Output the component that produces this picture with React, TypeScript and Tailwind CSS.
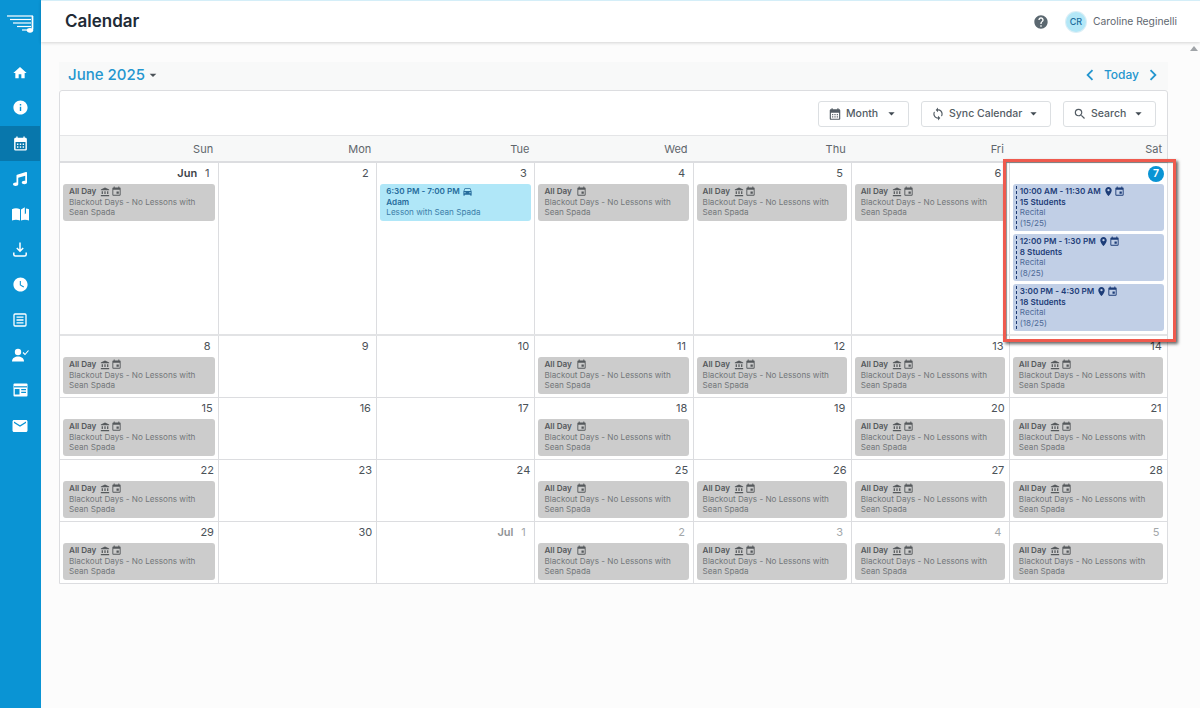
import { ReactNode } from 'react';
import { FaMusic } from 'react-icons/fa';
import {
  MdHome,
  MdInfo,
  MdCalendarMonth,
  MdWatchLater,
  MdHelp,
  MdPlace,
  MdDirectionsCar,
  MdAccountBalance,
  MdEvent,
  MdArrowDropDown,
  MdSync,
  MdSearch,
  MdChevronLeft,
  MdChevronRight,
  MdEmail,
} from 'react-icons/md';

const days = ['Sun', 'Mon', 'Tue', 'Wed', 'Thu', 'Fri', 'Sat'];

type EventKind = 'none' | 'blackout' | 'blackoutBank';

type Cell = {
  label: string;
  prefix?: string;
  muted?: boolean;
  kind: EventKind;
};

const firstRow: Cell[] = [
  { label: '1', prefix: 'Jun', kind: 'blackoutBank' },
  { label: '2', kind: 'none' },
  { label: '3', kind: 'none' },
  { label: '4', kind: 'blackout' },
  { label: '5', kind: 'blackoutBank' },
  { label: '6', kind: 'blackoutBank' },
  { label: '7', kind: 'none' },
];

const weeks: Cell[][] = [
  [
    { label: '8', kind: 'blackoutBank' },
    { label: '9', kind: 'none' },
    { label: '10', kind: 'none' },
    { label: '11', kind: 'blackout' },
    { label: '12', kind: 'blackoutBank' },
    { label: '13', kind: 'blackoutBank' },
    { label: '14', kind: 'blackoutBank' },
  ],
  [
    { label: '15', kind: 'blackoutBank' },
    { label: '16', kind: 'none' },
    { label: '17', kind: 'none' },
    { label: '18', kind: 'blackout' },
    { label: '19', kind: 'none' },
    { label: '20', kind: 'blackoutBank' },
    { label: '21', kind: 'blackoutBank' },
  ],
  [
    { label: '22', kind: 'blackoutBank' },
    { label: '23', kind: 'none' },
    { label: '24', kind: 'none' },
    { label: '25', kind: 'blackout' },
    { label: '26', kind: 'blackoutBank' },
    { label: '27', kind: 'blackoutBank' },
    { label: '28', kind: 'blackoutBank' },
  ],
  [
    { label: '29', kind: 'blackoutBank' },
    { label: '30', kind: 'none' },
    { label: '1', prefix: 'Jul', muted: true, kind: 'none' },
    { label: '2', muted: true, kind: 'blackout' },
    { label: '3', muted: true, kind: 'blackoutBank' },
    { label: '4', muted: true, kind: 'blackoutBank' },
    { label: '5', muted: true, kind: 'blackoutBank' },
  ],
];

const recitals = [
  { time: '10:00 AM - 11:30 AM', students: '15 Students', count: '(15/25)' },
  { time: '12:00 PM - 1:30 PM', students: '8 Students', count: '(8/25)' },
  { time: '3:00 PM - 4:30 PM', students: '18 Students', count: '(18/25)' },
];

function Logo() {
  return (
    <svg width="27" height="18" viewBox="0 0 27 18" fill="none" stroke="white" strokeWidth="1.2">
      <path d="M0 1H26" />
      <path d="M3 4.5H24" />
      <path d="M6 8H24" />
      <path d="M10 11.5H24" />
      <path d="M15 15H20" />
      <path d="M25.5 1V14.5" strokeWidth="1.7" />
      <ellipse cx="23" cy="15.3" rx="3.2" ry="2.4" fill="white" stroke="none" />
    </svg>
  );
}

function BookIcon() {
  return (
    <svg width="17" height="14" viewBox="0 0 17 14" fill="white">
      <path d="M0 2.2C2.5 1 5.5 1 8 2.2V13.5C5.5 12.4 2.5 12.4 0 13.5Z" />
      <path d="M9 2.4L12.8 0.3V7.2L14 6.2V1.6C15 1.7 16 1.9 17 2.2V13.5C14.5 12.4 11.5 12.4 9 13.5Z" />
    </svg>
  );
}

function DownloadIcon() {
  return (
    <svg width="14" height="15" viewBox="0 0 14 15" fill="none" stroke="white" strokeWidth="1.5">
      <path d="M7 0.5V9M3.8 6L7 9.2L10.2 6" />
      <path d="M0.8 10.5V12.5C0.8 13.4 1.4 14 2.3 14H11.7C12.6 14 13.2 13.4 13.2 12.5V10.5" />
    </svg>
  );
}

function ListIcon() {
  return (
    <svg width="14" height="14" viewBox="0 0 14 14" fill="none" stroke="white" strokeWidth="1.3">
      <rect x="1" y="1" width="12" height="12" rx="1" />
      <path d="M3.5 4.2H10.5M3.5 7H10.5M3.5 9.8H10.5" />
    </svg>
  );
}

function PersonCheckIcon() {
  return (
    <svg width="17" height="14" viewBox="0 0 17 14" fill="white">
      <circle cx="6" cy="4" r="3.2" />
      <path d="M0 13.5C0 10 3 8.6 6 8.6S12 10 12 13.5Z" />
      <path d="M11 4.5L13 6.5L16.5 2.5" fill="none" stroke="white" strokeWidth="1.1" />
    </svg>
  );
}

function PanelIcon() {
  return (
    <svg width="15" height="14" viewBox="0 0 15 14" fill="none">
      <rect x="0.5" y="0.5" width="14" height="13" rx="1" fill="white" />
      <path d="M1 3.8H14" stroke="#0a94d4" strokeWidth="1.2" />
      <path d="M1.8 6H6.5V11.5H1.8ZM8.2 8.7H13V10H8.2ZM8.2 6H13V7.2H8.2Z" fill="#0a94d4" />
    </svg>
  );
}

function NavItem({ children, active }: { children: ReactNode; active?: boolean }) {
  return (
    <div className={`flex h-[35.3px] w-[40px] items-center justify-center ${active ? 'bg-[#0877ac]' : ''}`}>
      {children}
    </div>
  );
}

function Sidebar() {
  return (
    <aside className="flex h-full w-[41px] shrink-0 flex-col bg-[#0a94d4]">
      <div className="flex h-[55px] w-[40px] items-start justify-center pt-[15px]">
        <Logo />
      </div>
      <NavItem><MdHome className="text-white" size={16} /></NavItem>
      <NavItem><MdInfo className="text-white" size={17} /></NavItem>
      <NavItem active><MdCalendarMonth className="text-white" size={17} /></NavItem>
      <NavItem><FaMusic className="text-white" size={14} /></NavItem>
      <NavItem><BookIcon /></NavItem>
      <NavItem><DownloadIcon /></NavItem>
      <NavItem><MdWatchLater className="text-white" size={17} /></NavItem>
      <NavItem><ListIcon /></NavItem>
      <NavItem><PersonCheckIcon /></NavItem>
      <NavItem><PanelIcon /></NavItem>
      <NavItem><MdEmail className="text-white" size={18} /></NavItem>
    </aside>
  );
}

function Topbar() {
  return (
    <header className="flex h-[42px] items-center justify-between border-t border-t-[#d4eef8] bg-white pl-[24px] pr-[23px] shadow-[0_1px_3px_rgba(0,0,0,0.16)]">
      <h1 className="text-[17px] font-semibold text-[#212b36]">Calendar</h1>
      <div className="flex items-center">
        <MdHelp className="text-[#5b6870]" size={16} />
        <div className="ml-[17px] flex h-[20px] w-[20px] items-center justify-center rounded-full bg-[#b3e7f7] text-[9px] font-medium text-[#1d6c9c] shadow-[0_0_0_1px_#dceff6]">
          CR
        </div>
        <span className="ml-[7px] text-[10.3px] text-[#5f6870]">Caroline Reginelli</span>
      </div>
    </header>
  );
}

function ToolButton({ icon, label, width }: { icon: ReactNode; label: string; width: string }) {
  return (
    <button className={`flex h-[26px] items-center whitespace-nowrap rounded-[3px] border border-[#dcdfe2] bg-white pl-[9px] text-[10.5px] font-medium text-[#535c64] ${width}`}>
      {icon}
      <span className="ml-[4px]">{label}</span>
      <MdArrowDropDown className="ml-auto mr-[9px] text-[#414a52]" size={15} />
    </button>
  );
}

function BlackoutEvent({ bank }: { bank: boolean }) {
  return (
    <div className="ml-[3px] mr-[3.5px] h-[37px] rounded-[3px] bg-[#cccccc] px-[6px] pt-[2px] text-[8.15px] leading-[10.3px] text-[#73777a]">
      <div className="flex h-[11px] items-center font-semibold text-[#55595c]">
        <span>All Day</span>
        {bank && <MdAccountBalance className="ml-[4px]" size={10} />}
        <MdEvent className={bank ? 'ml-[1px]' : 'ml-[4px]'} size={11} />
      </div>
      <div>Blackout Days - No Lessons with Sean Spada</div>
    </div>
  );
}

function DayLabel({ cell }: { cell: Cell }) {
  const color = cell.muted ? 'text-[#a3a7aa]' : 'text-[#4b5258]';
  return (
    <div className={`flex h-[21px] items-center justify-end pr-[3px] text-[11px] ${color}`}>
      {cell.prefix && (
        <span className={`mr-[2px] font-semibold ${cell.muted ? 'text-[#8f9396]' : 'text-[#3d4349]'}`}>{cell.prefix}</span>
      )}
      <span className="w-[16px] text-center">{cell.label}</span>
    </div>
  );
}

function DayCell({ cell, children, first }: { cell: Cell; children?: ReactNode; first?: boolean }) {
  return (
    <div className={`min-w-0 ${first ? '' : 'border-l border-[#dcdde0]'}`}>
      <DayLabel cell={cell} />
      {cell.kind !== 'none' && <BlackoutEvent bank={cell.kind === 'blackoutBank'} />}
      {children}
    </div>
  );
}

function LessonEvent() {
  return (
    <div className="mx-[3px] h-[37px] rounded-[3px] bg-[#b0e7f8] px-[6px] pt-[2px] text-[8.15px] leading-[10.3px] text-[#3d7ea8]">
      <div className="flex h-[11px] items-center font-semibold text-[#266c9c]">
        <span>6:30 PM - 7:00 PM</span>
        <MdDirectionsCar className="ml-[2px]" size={11} />
      </div>
      <div className="font-semibold text-[#266c9c]">Adam</div>
      <div>Lesson with Sean Spada</div>
    </div>
  );
}

function RecitalEvent({ time, students, count }: { time: string; students: string; count: string }) {
  return (
    <div className="mx-[3px] mb-[3px] h-[47px] rounded-[3px] bg-[#c1cfe6] py-[2px] pl-[3px] text-[8.15px] leading-[10.3px] text-[#4f6b98]">
      <div className="h-full border-l border-dashed border-[#1c3a72] pl-[3px]">
        <div className="flex h-[11px] items-center font-semibold text-[#1d3d78]">
          <span>{time}</span>
          <MdPlace className="ml-[2px]" size={11} />
          <MdEvent size={11} />
        </div>
        <div className="font-semibold text-[#1d3d78]">{students}</div>
        <div>Recital</div>
        <div>{count}</div>
      </div>
    </div>
  );
}

function Calendar() {
  return (
    <section className="relative mx-[18px] mt-[20px] w-[1109px]">
      <div className="flex h-[28px] items-center justify-between bg-[#f8f9f9] pb-[2px] pl-[9px] pr-[4px]">
        <div className="flex items-center">
          <span className="text-[15px] font-medium text-[#2496cf]">June 2025</span>
          <MdArrowDropDown className="text-[#4b5258]" size={16} />
        </div>
        <div className="flex items-center text-[#2496cf]">
          <MdChevronLeft size={22} />
          <span className="mx-[3px] text-[12px] font-medium">Today</span>
          <MdChevronRight size={22} />
        </div>
      </div>
      <div className="overflow-hidden rounded-t-[3px] border border-[#dcdde0] bg-white">
        <div className="flex h-[45px] items-center justify-end gap-[12px] border-b border-[#e4e5e7] pr-[11px] pt-[1px]">
          <ToolButton icon={<MdCalendarMonth className="text-[#535c64]" size={14} />} label="Month" width="w-[91px]" />
          <ToolButton icon={<MdSync className="text-[#535c64]" size={14} />} label="Sync Calendar" width="w-[130px]" />
          <ToolButton icon={<MdSearch className="text-[#535c64]" size={14} />} label="Search" width="w-[93px]" />
        </div>
        <div className="grid h-[27px] grid-cols-7 border-b-2 border-[#dcdde0] bg-[#f7f8f8] pt-[1px]">
          {days.map((day) => (
            <div key={day} className="flex items-center justify-end pr-[5px] text-[11px] text-[#5f666c]">
              {day}
            </div>
          ))}
        </div>
        <div className="grid h-[173px] grid-cols-7 border-b-2 border-[#e2e3e5]">
          {firstRow.map((cell, i) => {
            if (cell.label === '7') {
              return (
                <div key={cell.label} className="min-w-0 border-l border-[#dcdde0]">
                  <div className="flex h-[21px] items-center justify-end pr-[3px]">
                    <span className="flex h-[16px] w-[16px] items-center justify-center rounded-full bg-[#0a94d4] text-[10.5px] font-semibold text-white">
                      7
                    </span>
                  </div>
                  {recitals.map((r) => (
                    <RecitalEvent key={r.time} {...r} />
                  ))}
                </div>
              );
            }
            return (
              <DayCell key={cell.label} cell={cell} first={i === 0}>
                {cell.label === '3' && <LessonEvent />}
              </DayCell>
            );
          })}
        </div>
        {weeks.map((week, w) => (
          <div
            key={week[0].label}
            className={`grid grid-cols-7 ${w === weeks.length - 1 ? 'h-[61px]' : 'h-[62px] border-b border-[#dcdde0]'}`}
          >
            {week.map((cell, i) => (
              <DayCell key={cell.label} cell={cell} first={i === 0} />
            ))}
          </div>
        ))}
      </div>
      {/* red callout around the recital day */}
      <div className="pointer-events-none absolute left-[944px] top-[97px] h-[183px] w-[173px] border-[3px] border-[#ef5a4e] shadow-[2px_2px_3px_rgba(0,0,0,0.6),inset_1px_1px_1px_rgba(0,0,0,0.45)]" />
    </section>
  );
}

export default function App() {
  return (
    <div className="flex h-[708px] w-[1200px] overflow-hidden bg-white font-['Inter',sans-serif]">
      <Sidebar />
      <div className="relative min-w-0 flex-1 bg-[#fcfcfc]">
        <Topbar />
        <Calendar />
        <div className="absolute right-[2px] top-[46px] h-0 w-0 border-x-[4px] border-b-[5px] border-x-transparent border-b-[#a0a4a8]" />
      </div>
    </div>
  );
}
